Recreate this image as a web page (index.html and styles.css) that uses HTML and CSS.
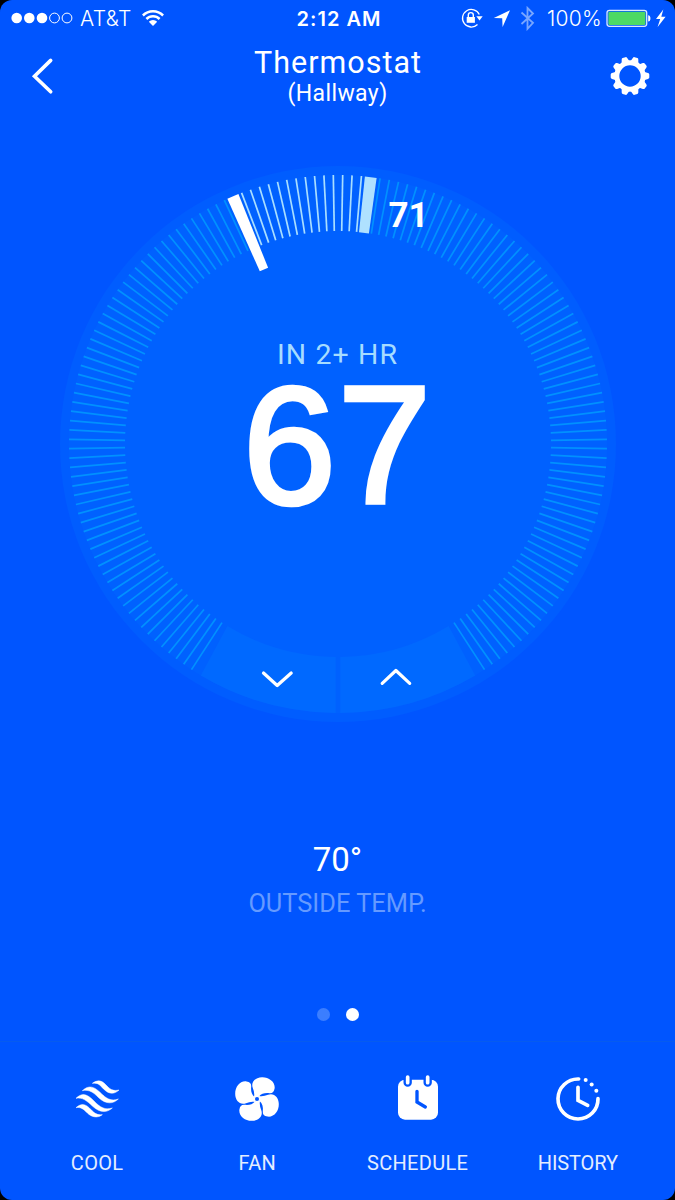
FILE: index.html
```html
<!DOCTYPE html>
<html lang="en">
<head>
<meta charset="utf-8">
<title>Thermostat</title>
<link rel="stylesheet" href="styles.css">
</head>
<body>
<div class="screen">
  <header class="status">
    <div class="status-left">
      <svg class="signal" width="62" height="14" viewBox="0 0 62 14">
        <g fill="#fff"><circle cx="5.7" cy="7" r="5.3"/><circle cx="18.3" cy="7" r="5.3"/><circle cx="31" cy="7" r="5.3"/></g>
        <g fill="none" stroke="#fff"><circle cx="43.5" cy="7" r="4.9"/><circle cx="56" cy="7" r="4.9"/></g>
      </svg>
      <span class="carrier">AT&amp;T</span>
      <svg class="wifi" width="22" height="16" viewBox="0 0 22 16">
        <path d="M.9 5.5a14.3 14.3 0 0 1 20.2 0M4.4 9a9.3 9.3 0 0 1 13.2 0" fill="none" stroke="#fff" stroke-width="2.5"/>
        <path d="M11 16L6.8 11.8a6 6 0 0 1 8.4 0z" fill="#fff"/>
      </svg>
    </div>
    <span class="clock">2:12 AM</span>
    <div class="status-right">
      <svg width="74" height="26" viewBox="461 5 74 26">
        <path d="M477.5 24.5A8.8 8.8 0 1 1 479.3 14.5" fill="none" stroke="#fff" stroke-width="1.3"/>
        <path d="M476.3 16.2h6.4l-3.2 4.4z" fill="#fff"/>
        <path d="M466.7 17h8.2v5.8h-8.2z" fill="#fff"/>
        <path d="M468.3 17.2v-2.1a2.5 2.5 0 0 1 5 0V17.2" fill="none" stroke="#fff" stroke-width="1.4"/>
        <path d="M510 10.2L493.8 18l8.4.3.4 8.6z" fill="#fff"/>
        <path d="M521.5 12.5l11.5 10.3-5.5 6V8l5.500 5.500-11.500 10.500" fill="none" stroke="#78a6ff" stroke-width="1.8"/>
      </svg>
      <span class="percent">100%</span>
      <svg width="61" height="18" viewBox="606 9 61 18">
        <rect x="607" y="10.3" width="39.7" height="16" rx="2.5" fill="none" stroke="#dbe8ff" stroke-width="1.3"/>
        <rect x="608.4" y="11.7" width="37" height="13.2" rx="1.2" fill="#4cd964"/>
        <path d="M648.2 15.200c3 0 3 6.400 0 6.400z" fill="#fff"/>
        <path d="M663.3 9.5L656 19h4.200l-2.600 8 8-10.200h-4.300z" fill="#fff"/>
      </svg>
    </div>
  </header>

  <nav class="navbar">
    <svg class="back" width="24" height="38" viewBox="0 0 24 38"><path d="M20.7 3.4L4.5 19.3l16.2 15.5" fill="none" stroke="#fff" stroke-width="3.6" stroke-linecap="round"/></svg>
    <div class="heading">
      <h1 class="title">Thermostat</h1>
      <p class="subtitle">(Hallway)</p>
    </div>
    <svg class="gear" width="40" height="40" viewBox="-20 -20 40 40">
      <circle r="13.2" fill="none" stroke="#fff" stroke-width="5"/>
      <g id="teeth" fill="#fff"></g>
    </svg>
  </nav>

  <main class="main">
    <svg class="dial" width="560" height="560" viewBox="-280 -280 560 560">
      <circle r="278" fill="#005dff"/>
      <circle r="269" fill="#0061ff"/>
      <g class="pad">
        <path d="M-2.3 213A213 213 0 0 1 -110.6 182L-137.2 231.5A269 269 0 0 0 -2.3 269z"/>
        <path d="M2.3 213A213 213 0 0 0 110.6 182L137.2 231.5A269 269 0 0 1 2.3 269z"/>
      </g>
      <g id="ticks"></g>
      <path class="current" transform="rotate(7)" d="M-5.9 -268.8h11.8L5 -212.8h-10z"/>
      <path class="target" transform="rotate(-23)" d="M-6 -269H6L4.5 -189.5h-9z"/>
      <path class="chevron" d="M-74.5 229L-60.8 241.5-46.8 229M44.200 239.400L57.900 226.500 71.700 239.400"/>
      <text class="ambient" x="50.5 70.5" y="-217.5">71</text>
      <text class="eta" x="-61" y="-80" textLength="120">IN 2+ HR</text>
      <text class="temp" x="-95 0" y="59">67</text>
    </svg>
    <p class="outside">70°</p>
    <p class="outside-label">OUTSIDE TEMP.</p>
    <div class="pager"><i class="dot"></i><i class="dot dot-on"></i></div>
  </main>

  <footer class="tabs">
    <div class="tab">
      <svg width="48" height="48" viewBox="69 106 144 144" fill="#fff" stroke="#fff" stroke-width="1.5">
        <path d="M127 131C150 115 160 128 172 140C183 152 193 154 207 151C195 163 178 165 163 150C150 137 145 128 127 131Z"/>
        <path d="M97 153C118 134 133 142 150 158C168 176 182 186 205 178C190 193 168 195 146 174C130 158 118 149 97 153Z"/>
        <path d="M78 176C98 157 112 164 132 184C150 203 165 212 187 205C170 220 150 220 127 199C110 183 97 172 78 176Z"/>
        <path d="M78 204C97 187 110 196 122 209C133 221 142 227 157 225C143 236 125 233 112 220C102 210 93 201 78 204Z"/>
      </svg>
      <span class="tab-label">COOL</span>
    </div>
    <div class="tab">
      <svg width="48" height="48" viewBox="-24 -24 48 48" fill="#fff">
        <defs><path id="blade" d="M-3 -2C-2.4 -5 -3 -8 -4.2 -11C-6.500 -17 -1.500 -21.800 5 -21.800C12 -22 18.500 -17 17.600 -10.500C17 -7 15.500 -5.600 12.500 -5.800C8 -6.300 4.500 -5.500 2 -2.500L0 0Z"/></defs>
        <use href="#blade"/><use href="#blade" transform="rotate(90)"/><use href="#blade" transform="rotate(180)"/><use href="#blade" transform="rotate(270)"/>
        <circle r="2" fill="#0055ff"/>
      </svg>
      <span class="tab-label">FAN</span>
    </div>
    <div class="tab">
      <svg width="48" height="48" viewBox="131 106 144 144" fill="none" stroke-linecap="round">
        <rect x="143" y="120" width="120" height="120" rx="21" fill="#fff"/>
        <path d="M172 108V129M232 108V129" stroke="#0055ff" stroke-width="25"/>
        <path d="M172 112V129M232 112V129" stroke="#fff" stroke-width="11"/>
        <path d="M200 155V187L225 202" stroke="#0055ff" stroke-width="10"/>
      </svg>
      <span class="tab-label">SCHEDULE</span>
    </div>
    <div class="tab">
      <svg width="48" height="48" viewBox="611 106 144 144" fill="none" stroke="#fff" stroke-linecap="round">
        <path d="M685 118A60 60 0 1 0 743 177" stroke-width="11"/>
        <path d="M683 143V182L712 197" stroke-width="11"/>
        <g fill="#fff" stroke="none"><circle cx="706" cy="121" r="6"/><circle cx="724" cy="134.5" r="6"/><circle cx="738" cy="153" r="6"/></g>
      </svg>
      <span class="tab-label history">HISTORY</span>
    </div>
  </footer>
</div>
<script src="dial.js"></script>
</body>
</html>
```
FILE: dial.js
```js
const SVG = 'http://www.w3.org/2000/svg';

// Scale marks every 2 degrees, leaving the bottom open for the buttons.
const TARGET = -23;
const CURRENT = 7;
const ticks = document.getElementById('ticks');
for (let angle = -147; angle <= 147; angle += 2) {
  if (angle === TARGET || angle === CURRENT) continue;
  const line = document.createElementNS(SVG, 'line');
  line.setAttribute('y1', -269);
  line.setAttribute('y2', -213);
  line.setAttribute('transform', `rotate(${angle})`);
  line.setAttribute('class', angle > TARGET && angle < CURRENT ? 'tick tick-on' : 'tick');
  ticks.appendChild(line);
}

const teeth = document.getElementById('teeth');
for (let i = 0; i < 10; i++) {
  const tooth = document.createElementNS(SVG, 'path');
  tooth.setAttribute('d', 'M-4 -14.6L-2.9 -18Q-2.5 -19.3 -1.5 -19.3H1.5Q2.5 -19.3 2.9 -18L4 -14.6Z');
  tooth.setAttribute('transform', `rotate(${18 + i * 36})`);
  teeth.appendChild(tooth);
}
```
FILE: styles.css
```css
* { box-sizing: border-box; }

body {
  margin: 0;
  background: #000;
  font-family: Roboto, "Liberation Sans", sans-serif;
  color: #fff;
}

h1, p { margin: 0; font-weight: 400; }
svg { display: block; flex: none; }

.screen {
  width: 675px;
  height: 1200px;
  display: flex;
  flex-direction: column;
  background: #0055ff;
  border-radius: 12px;
  overflow: hidden;
}

.status {
  height: 36px;
  padding: 0 8px 0 11px;
  display: grid;
  grid-template-columns: 1fr auto 1fr;
  align-items: center;
  font-family: Inter, "Liberation Sans", sans-serif;
  font-size: 20px;
  line-height: 24px;
  white-space: nowrap;
}
.status-left, .status-right { display: flex; align-items: center; }
.status-right { justify-content: flex-end; }
.carrier { width: 52px; margin: 2px 10px 0 7px; font-size: 21px; font-weight: 300; letter-spacing: 0.4px; }
.clock { margin-top: 1px; font-weight: 600; letter-spacing: 1px; }
.percent { width: 54px; margin: 2px 5px 0 12px; font-size: 21px; font-weight: 300; letter-spacing: 0.3px; }

.navbar {
  height: 80px;
  padding: 9px 25px 0 30px;
  display: flex;
  justify-content: space-between;
}
.back { margin-top: 12px; margin-right: 16px; }
.gear { margin-top: 11px; }
.heading { text-align: center; margin-right: 5px; }
.title { font-size: 30.5px; line-height: 36px; letter-spacing: 1px; margin-right: -1px; }
.subtitle { font-size: 23px; line-height: 26px; letter-spacing: 0.4px; }

.main {
  flex: 1;
  display: flex;
  flex-direction: column;
  align-items: center;
  padding-top: 48px;
}
.pad { fill: #0069ff; }
.tick { stroke: #0091ff; stroke-width: 1.7; }
.tick-on { stroke: #a8deff; }
.current { fill: #afe1ff; }
.target { fill: #fff; }
.chevron { fill: none; stroke: #fff; stroke-width: 3.2; stroke-linecap: round; stroke-linejoin: round; }
.ambient { fill: #fff; font-size: 35px; font-weight: 700; }
.eta { fill: #a6dcff; font-size: 28.5px; }
.temp {
  fill: #fff;
  stroke: #fff;
  stroke-width: 4.5;
  font-family: "Liberation Sans", sans-serif;
  font-size: 167px;
}

.outside { margin-top: 116px; font-size: 33px; line-height: 40px; }
.outside-label { margin-top: 7px; font-size: 25.4px; line-height: 32px; color: #659aff; }
.pager { display: flex; gap: 16px; margin-top: 89px; }
.dot { width: 13px; height: 13px; border-radius: 50%; background: #3b7eff; }
.dot-on { background: #fff; }

.tabs {
  height: 159px;
  padding: 33px 17px 0;
  border-top: 1px solid #075bef;
  display: grid;
  grid-template-columns: repeat(4, 1fr);
}
.tab { display: flex; flex-direction: column; align-items: center; gap: 28px; }
.tab-label { font-size: 20px; line-height: 24px; letter-spacing: 0.3px; color: #e4edff; }
.history { letter-spacing: -0.1px; }
```
